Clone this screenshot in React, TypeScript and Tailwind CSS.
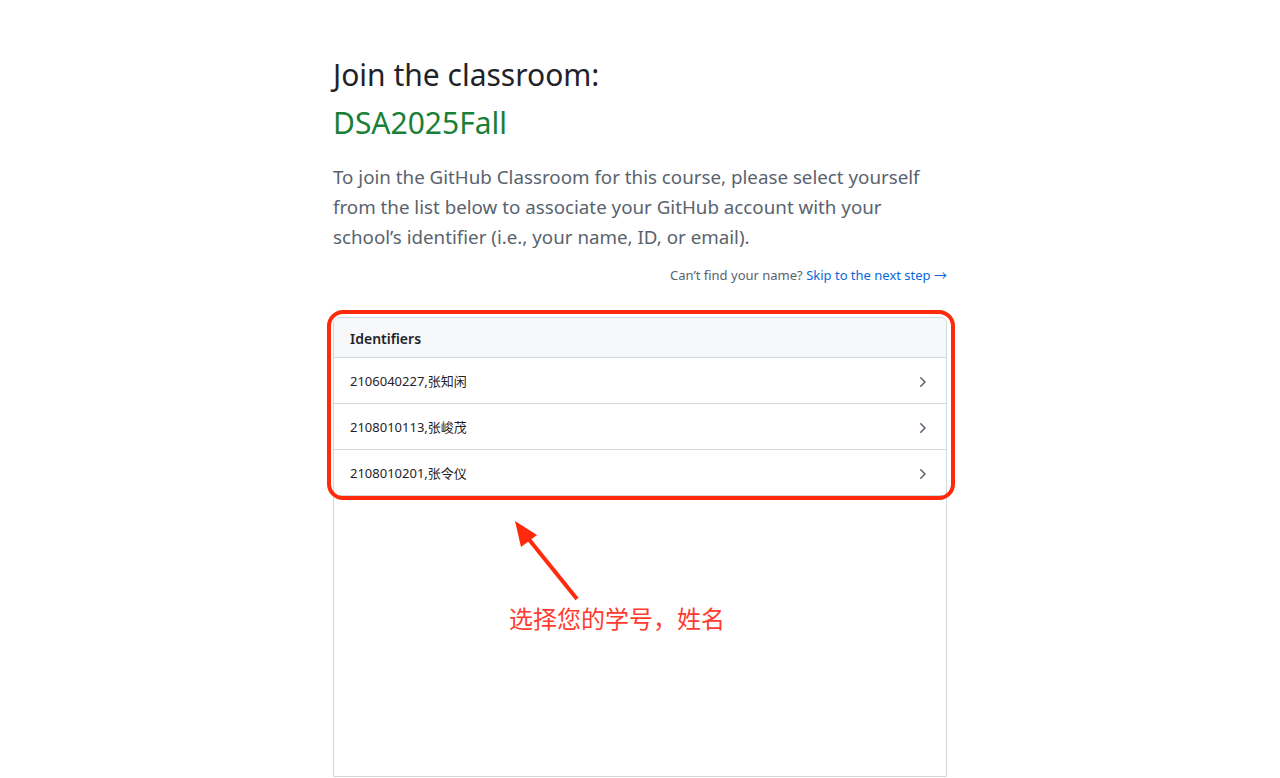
import React from 'react';

const font = { fontFamily: '"Noto Sans", "Noto Sans CJK SC", sans-serif' };

const identifiers = ['2106040227,张知闲', '2108010113,张峻茂', '2108010201,张令仪'];

function Chevron() {
  return (
    <svg width="16" height="16" viewBox="0 0 16 16" className="text-[#59636e]" fill="currentColor">
      <path d="M6.22 3.22a.75.75 0 0 1 1.06 0l4.25 4.25a.75.75 0 0 1 0 1.06l-4.25 4.25a.751.751 0 0 1-1.042-.018.751.751 0 0 1-.018-1.042L9.94 8 6.22 4.28a.75.75 0 0 1 0-1.06Z" />
    </svg>
  );
}

export default function App() {
  return (
    <div className="min-h-screen bg-white" style={font}>
      <div className="mx-auto w-[614px] pt-[53px]">
        <h1 className="text-[30px] leading-[44px] text-[#1f2328] font-normal">Join the classroom:</h1>
        <h2 className="text-[30px] leading-[52px] text-[#1a7f37] font-normal">DSA2025Fall</h2>
        <p className="mt-[13px] pr-[10px] text-[18.75px] leading-[30px] text-[#59636e]">
          To join the GitHub Classroom for this course, please select yourself from the list below to associate your GitHub account with your school’s identifier (i.e., your name, ID, or email).
        </p>
        <p className="mt-[13px] text-right text-[13px] leading-5 text-[#59636e]">
          Can’t find your name? <a className="text-[#0969da]">Skip to the next step →</a>
        </p>

        <div className="relative mt-[32px]">
          <div className="h-[460px] rounded-t-md border border-[#d1d9e0] overflow-hidden">
            <div className="h-[40px] px-4 pt-[2px] flex items-center bg-[#f6f8fa] border-b border-[#d1d9e0] text-[14px] font-semibold text-[#1f2328]">
              Identifiers
            </div>
            {identifiers.map((id) => (
              <div key={id} className="h-[46px] px-4 pt-[3px] flex items-center justify-between border-b border-[#d1d9e0] text-[13px] text-[#1f2328]">
                <span>{id}</span>
                <Chevron />
              </div>
            ))}
          </div>

          <div className="absolute left-[-6px] top-[-7px] w-[628px] h-[190px] rounded-[16px] border-[4px] border-[#ff2a0c] pointer-events-none" />

          <svg className="absolute left-[178px] top-[202px]" width="70" height="84" viewBox="0 0 70 84">
            <line x1="66" y1="80" x2="16" y2="18" stroke="#ff2a0c" strokeWidth="4" />
            <polygon points="4,2 26,16 10,28" fill="#ff2a0c" />
          </svg>

          <div className="absolute left-[176px] top-[286px] text-[24px] leading-8 text-[#ff3b30]">
            选择您的学号，姓名
          </div>
        </div>
      </div>
    </div>
  );
}
